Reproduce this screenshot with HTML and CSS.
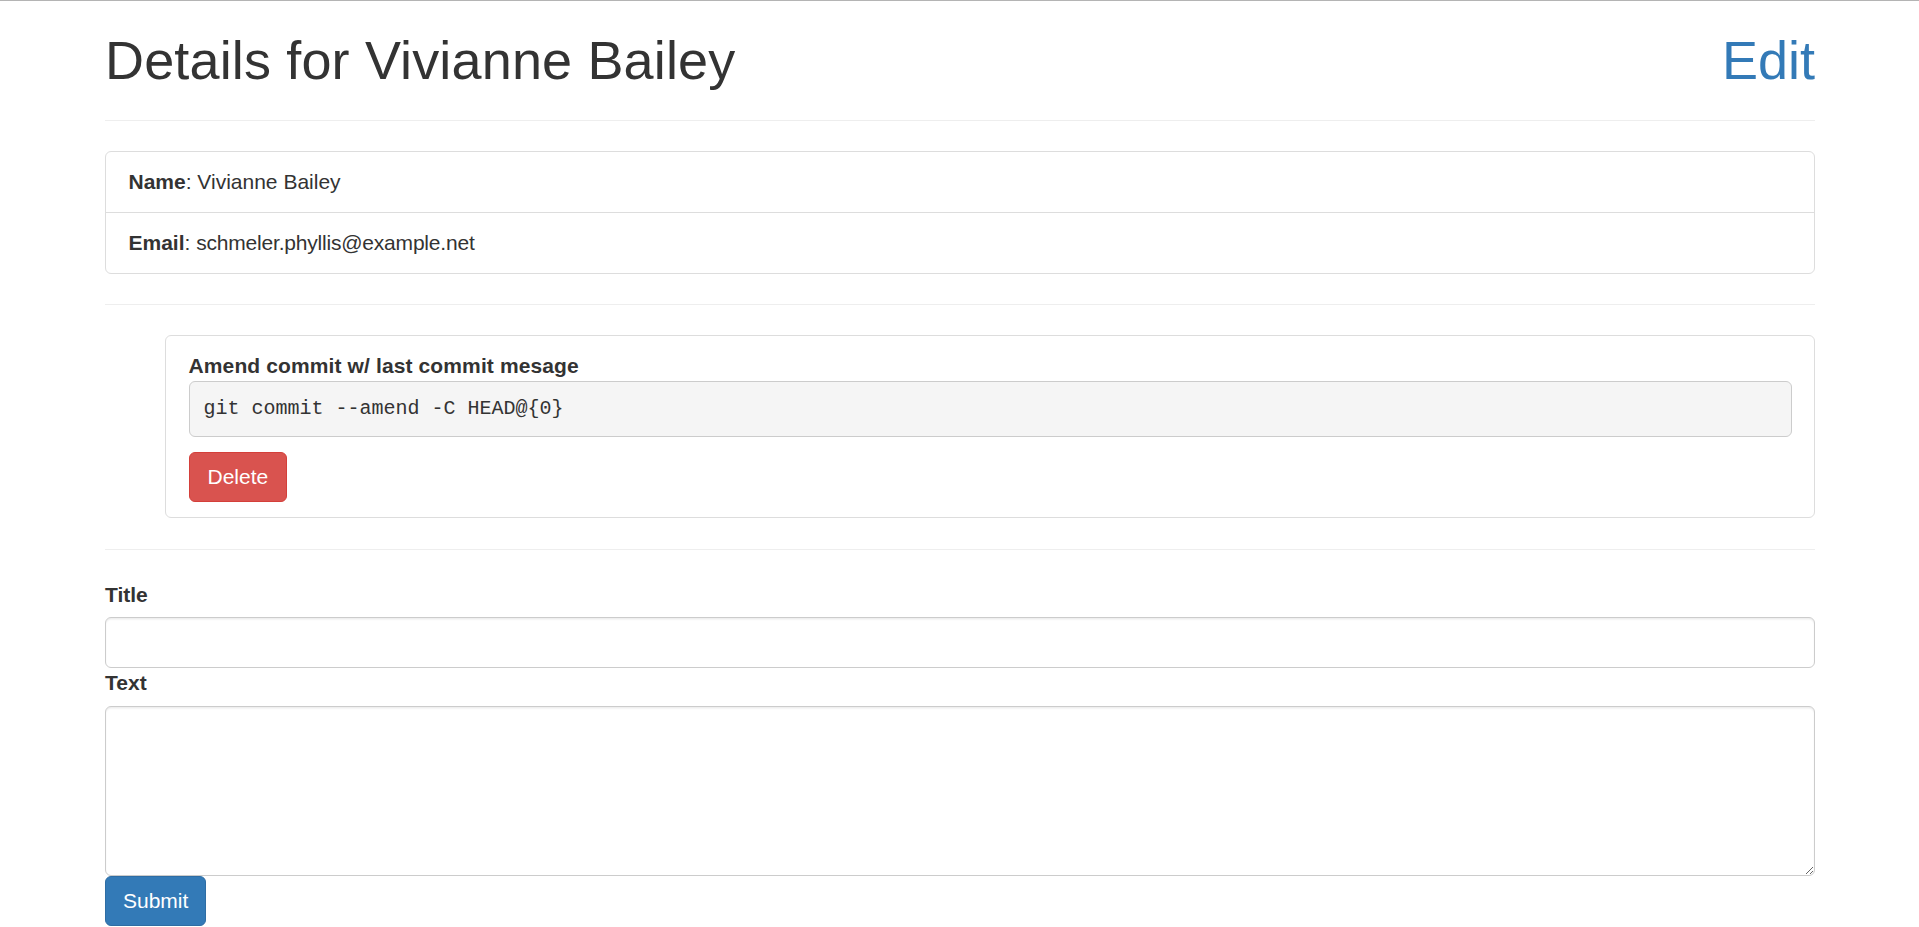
FILE: index.html
```html
<!DOCTYPE html>
<html lang="en">
<head>
<meta charset="utf-8">
<title>Details for Vivianne Bailey</title>
<link rel="stylesheet" href="styles.css">
</head>
<body>
<div class="container">
  <h1 class="page-title"><span class="page-title-text">Details for Vivianne Bailey</span><a class="edit-link" href="#">Edit</a></h1>
  <hr class="divider">
  <ul class="details">
    <li class="details-item"><strong>Name</strong>: Vivianne Bailey</li>
    <li class="details-item"><strong>Email</strong>: <span class="details-email">schmeler.phyllis@example.net</span></li>
  </ul>
  <hr class="divider">
  <ul class="snippets">
    <li class="snippet">
      <div class="snippet-title">Amend commit w/ last commit mesage</div>
      <pre class="snippet-code">git commit --amend -C HEAD@{0}</pre>
      <button class="btn btn-danger" type="button">Delete</button>
    </li>
  </ul>
  <hr class="divider">
  <form class="snippet-form">
    <label class="field-label" for="title">Title</label>
    <input class="field-input" id="title" type="text">
    <label class="field-label" for="text">Text</label>
    <textarea class="field-input field-textarea" id="text"></textarea>
    <button class="btn btn-primary" type="submit">Submit</button>
  </form>
</div>
</body>
</html>
```

FILE: styles.css
```css
* {
  box-sizing: border-box;
}

html,
body {
  margin: 0;
  padding: 0;
}

body {
  border-top: 1px solid #b4b4b4;
  background: #fff;
  color: #333;
  font-family: "Liberation Sans", Arial, sans-serif;
  font-size: 21px;
  line-height: 30px;
}

.container {
  width: 1710px;
  margin-left: 105px;
}

.page-title {
  display: flex;
  justify-content: space-between;
  margin: 30px 0 15px;
  font-size: 54px;
  line-height: 59.4px;
  font-weight: 400;
  color: #333;
}

.page-title-text {
  letter-spacing: 0.15px;
}

.edit-link {
  color: #337ab7;
  text-decoration: none;
}

.divider {
  height: 0;
  margin: 30px 0;
  border: 0;
  border-top: 1px solid #eee;
}

.details {
  list-style: none;
  margin: 0 0 30px;
  padding: 0;
  border: 1px solid #ddd;
  border-radius: 6px;
}

.details-item {
  padding: 15px 22.5px 14.5px;
}

.details-item + .details-item {
  border-top: 1px solid #ddd;
}

.details-item:last-child {
  padding-bottom: 15px;
}

.details-email {
  letter-spacing: -0.2px;
}

.snippets {
  list-style: none;
  margin: 0 0 31px;
  padding: 0 0 0 60px;
}

.snippet {
  border: 1px solid #ddd;
  border-radius: 6px;
  padding: 15px 22.5px;
}

.snippet-title {
  font-weight: 700;
  letter-spacing: 0.12px;
}

.snippet-code {
  margin: 0 0 15px;
  padding: 13px 14px;
  font-family: "Liberation Mono", "Courier New", monospace;
  font-size: 20px;
  line-height: 28px;
  color: #333;
  background: #f5f5f5;
  border: 1px solid #ccc;
  border-radius: 6px;
  white-space: pre-wrap;
}

.btn {
  display: inline-block;
  margin: 0;
  padding: 9px 18px;
  font-family: inherit;
  font-size: 21px;
  line-height: 30px;
  font-weight: 400;
  color: #fff;
  border: 1px solid transparent;
  border-radius: 6px;
  cursor: pointer;
}

.btn-danger {
  background: #d9534f;
  border-color: #d43f3a;
}

.btn-primary {
  padding-left: 17px;
  padding-right: 17px;
  background: #337ab7;
  border-color: #2e6da4;
}

.field-label {
  display: block;
  width: fit-content;
  margin-bottom: 7.5px;
  font-weight: 700;
}

.field-input {
  display: block;
  width: 100%;
  height: 51px;
  margin: 0;
  padding: 9px 18px;
  font-family: inherit;
  font-size: 21px;
  line-height: 30px;
  color: #555;
  background: #fff;
  border: 1px solid #ccc;
  border-radius: 6px;
  box-shadow: inset 0 1.5px 1.5px rgba(0, 0, 0, 0.075);
}

.field-textarea {
  height: 170px;
}
```
